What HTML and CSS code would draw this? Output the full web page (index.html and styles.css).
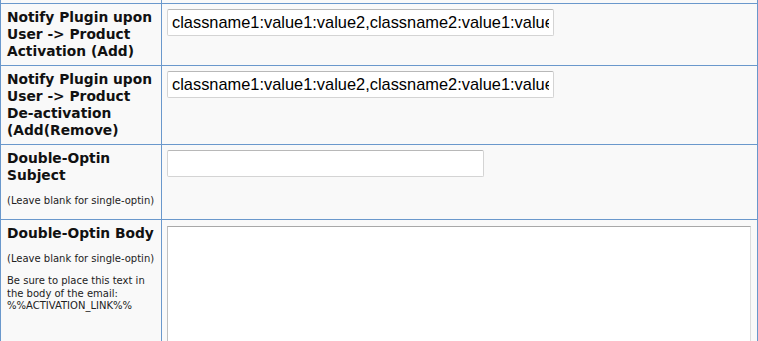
FILE: index.html
```html
<!DOCTYPE html>
<html>
<head>
<meta charset="utf-8">
<link rel="stylesheet" href="styles.css">
</head>
<body>
<table class="form-table">
  <colgroup><col class="col-label"><col class="col-field"></colgroup>
  <tr class="stub"><td></td><td></td></tr>
  <tr>
    <th>Notify Plugin upon User -&gt; Product Activation (Add)</th>
    <td><input class="text wide" type="text" value="classname1:value1:value2,classname2:value1:value2"></td>
  </tr>
  <tr>
    <th>Notify Plugin upon User -&gt; Product <span class="nowrap">De-activation</span> (Add(Remove)</th>
    <td><input class="text wide" type="text" value="classname1:value1:value2,classname2:value1:value2"></td>
  </tr>
  <tr>
    <th>Double-Optin Subject
      <p class="note">(Leave blank for single-optin)</p>
    </th>
    <td><input class="text medium" type="text" value=""></td>
  </tr>
  <tr>
    <th>Double-Optin Body
      <p class="note">(Leave blank for single-optin)</p>
      <p class="note">Be sure to place this text in the body of the email: %%ACTIVATION_LINK%%</p>
    </th>
    <td><div class="area-box"><textarea class="body-area"></textarea></div></td>
  </tr>
</table>
</body>
</html>
```

FILE: styles.css
```css
html, body {
  margin: 0;
  padding: 0;
  background: #ffffff;
}

.form-table {
  width: 758px;
  border-collapse: collapse;
  table-layout: fixed;
  background: #f9f9f9;
  font-family: "DejaVu Sans", Verdana, sans-serif;
  color: #111;
}

.col-label { width: 161px; }

.form-table th,
.form-table td {
  border: 1px solid #6a98cc;
  padding: 5px 5px 5px 6px;
  vertical-align: top;
  text-align: left;
}

.form-table td { padding-left: 5px; }

.form-table th {
  font-weight: bold;
  font-size: 13.8px;
  line-height: 17px;
}

.nowrap { white-space: nowrap; }

.form-table tr.stub td {
  border-top: none;
  height: 3px;
  padding: 0;
}

.note {
  margin: 11px 0 6px;
  font-weight: normal;
  font-size: 10px;
  line-height: 12.5px;
  color: #222;
}

.note + .note { margin-top: 10px; }

.text {
  box-sizing: border-box;
  display: block;
  height: 27px;
  margin: 0;
  padding: 3px 4px;
  font-family: "Liberation Sans", Arial, sans-serif;
  font-size: 16.4px;
  color: #000;
  background: #fff;
  border: 1px solid #d4d4d4;
  border-top-color: #b8b8b8;
  border-radius: 2px;
  outline: none;
}

.wide { width: 387px; }
.medium { width: 317px; }

.area-box {
  box-sizing: border-box;
  height: 170px;
  margin: 1px 1px 0 0;
  background: #fff;
  border: 1px solid #dcdcdc;
  border-top-color: #a8a8a8;
  border-left-color: #c0c0c0;
}

.body-area {
  box-sizing: border-box;
  display: block;
  width: 100%;
  height: 100%;
  margin: 0;
  padding: 2px;
  background: transparent;
  border: none;
  outline: none;
  resize: none;
}
```
